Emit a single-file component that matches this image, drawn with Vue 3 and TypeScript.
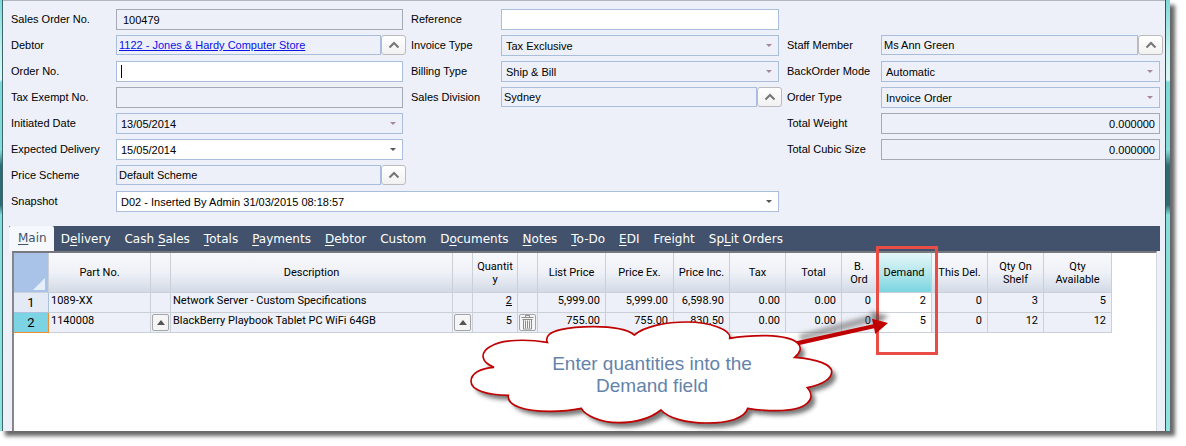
<script setup lang="ts">
import { ref } from 'vue'

type Kind = 'text' | 'lookup' | 'select'

interface Field {
  id: string
  label: string
  value: string
  kind: Kind
  editable?: boolean
  link?: boolean
  numeric?: boolean
  caret?: boolean
}

const columns: Field[][] = [
  [
    { id: 'sales-order', label: 'Sales Order No.', value: '100479', kind: 'text' },
    { id: 'debtor', label: 'Debtor', value: '1122 - Jones & Hardy Computer Store', kind: 'lookup', link: true },
    { id: 'order-no', label: 'Order No.', value: '', kind: 'text', editable: true, caret: true },
    { id: 'tax-exempt', label: 'Tax Exempt No.', value: '', kind: 'text' },
    { id: 'initiated', label: 'Initiated Date', value: '13/05/2014', kind: 'select' },
    { id: 'expected', label: 'Expected Delivery', value: '15/05/2014', kind: 'select', editable: true },
    { id: 'price-scheme', label: 'Price Scheme', value: 'Default Scheme', kind: 'lookup' },
  ],
  [
    { id: 'reference', label: 'Reference', value: '', kind: 'text', editable: true },
    { id: 'invoice-type', label: 'Invoice Type', value: 'Tax Exclusive', kind: 'select' },
    { id: 'billing-type', label: 'Billing Type', value: 'Ship & Bill', kind: 'select' },
    { id: 'division', label: 'Sales Division', value: 'Sydney', kind: 'lookup' },
  ],
  [
    { id: 'staff', label: 'Staff Member', value: 'Ms Ann Green', kind: 'lookup' },
    { id: 'backorder', label: 'BackOrder Mode', value: 'Automatic', kind: 'select' },
    { id: 'order-type', label: 'Order Type', value: 'Invoice Order', kind: 'select' },
    { id: 'weight', label: 'Total Weight', value: '0.000000', kind: 'text', numeric: true },
    { id: 'cubic', label: 'Total Cubic Size', value: '0.000000', kind: 'text', numeric: true },
  ],
]

// Each tab is split around its underlined access key.
const tabs: [string, string, string][] = [
  ['', 'M', 'ain'],
  ['D', 'e', 'livery'],
  ['Cash ', 'S', 'ales'],
  ['', 'T', 'otals'],
  ['', 'P', 'ayments'],
  ['', 'D', 'ebtor'],
  ['Custom', '', ''],
  ['D', 'o', 'cuments'],
  ['', 'N', 'otes'],
  ['', 'T', 'o-Do'],
  ['', 'E', 'DI'],
  ['Freight', '', ''],
  ['Sp', 'L', 'it Orders'],
]
const activeTab = ref(0)

interface Line {
  part: string
  description: string
  quantity: string
  figures: string[]
  demand: string
  stock: string[]
}

const lines: Line[] = [
  {
    part: '1089-XX',
    description: 'Network Server - Custom Specifications',
    quantity: '2',
    figures: ['5,999.00', '5,999.00', '6,598.90', '0.00', '0.00', '0'],
    demand: '2',
    stock: ['0', '3', '5'],
  },
  {
    part: '1140008',
    description: 'BlackBerry Playbook Tablet PC WiFi 64GB',
    quantity: '5',
    figures: ['755.00', '755.00', '830.50', '0.00', '0.00', '0'],
    demand: '5',
    stock: ['0', '12', '12'],
  },
]
const currentLine = 1
</script>

<template>
  <div class="page">
    <main class="window">
      <div class="edge left"></div>
      <div class="body">
        <form class="form" @submit.prevent>
          <div v-for="(fields, c) in columns" :key="c" class="column" :class="'column-' + (c + 1)">
            <div v-for="f in fields" :key="f.id" class="field" :class="f.kind">
              <label :for="f.id">{{ f.label }}</label>
              <template v-if="f.kind === 'lookup'">
                <div class="box short">
                  <a v-if="f.link" :id="f.id" href="#" class="link">{{ f.value }}</a>
                  <input v-else :id="f.id" :value="f.value" readonly />
                </div>
                <button type="button" class="lookup-button" :aria-label="'Look up ' + f.label">
                  <svg width="12" height="8" viewBox="0 0 12 8"><path d="M1.5 6.5 6 2l4.500 4.500" /></svg>
                </button>
              </template>
              <div v-else-if="f.kind === 'select'" class="box" :class="{ editable: f.editable }">
                <select :id="f.id"><option>{{ f.value }}</option></select>
                <i class="arrow"></i>
              </div>
              <div v-else class="box" :class="{ editable: f.editable, grey: !f.editable, numeric: f.numeric }">
                <input :id="f.id" :value="f.value" :readonly="!f.editable" />
                <i v-if="f.caret" class="caret"></i>
              </div>
            </div>
          </div>
          <div class="field select snapshot">
            <label for="snapshot">Snapshot</label>
            <div class="box editable">
              <select id="snapshot"><option>D02 - Inserted By Admin 31/03/2015 08:18:57</option></select>
              <i class="arrow"></i>
            </div>
          </div>
        </form>

        <nav class="tabs">
          <button
            v-for="(t, i) in tabs"
            :key="i"
            type="button"
            :class="{ active: i === activeTab }"
            @click="activeTab = i"
          >{{ t[0] }}<u>{{ t[1] }}</u>{{ t[2] }}</button>
        </nav>

        <section class="sheet">
          <table>
            <colgroup>
              <col class="w35" /><col class="w102" /><col class="w20" /><col class="w282" /><col class="w20" />
              <col class="w45" /><col class="w20" /><col class="w68" /><col class="w68" /><col class="w56" />
              <col class="w56" /><col class="w56" /><col class="w35" /><col class="w55" /><col class="w56" />
              <col class="w56" /><col class="w68" />
            </colgroup>
            <thead>
              <tr>
                <th class="corner"><svg width="12" height="12" viewBox="0 0 12 12"><path d="M12 0v12H0z" /></svg></th>
                <th>Part No.</th>
                <th></th>
                <th>Description</th>
                <th></th>
                <th class="breaking">Quantity</th>
                <th></th>
                <th>List Price</th>
                <th>Price Ex.</th>
                <th>Price Inc.</th>
                <th>Tax</th>
                <th>Total</th>
                <th>B.<br />Ord</th>
                <th class="demand">Demand</th>
                <th>This Del.</th>
                <th>Qty On<br />Shelf</th>
                <th>Qty<br />Available</th>
              </tr>
            </thead>
            <tbody>
              <tr v-for="(l, i) in lines" :key="l.part">
                <th scope="row" :class="{ current: i === currentLine }">{{ i + 1 }}</th>
                <td>{{ l.part }}</td>
                <td class="action">
                  <button v-if="i === currentLine" type="button" aria-label="Choose part">
                    <svg width="8" height="5" viewBox="0 0 8 5"><path d="M4 0l4 5H0z" fill="#555" /></svg>
                  </button>
                </td>
                <td>{{ l.description }}</td>
                <td class="action">
                  <button v-if="i === currentLine" type="button" aria-label="Edit description">
                    <svg width="8" height="5" viewBox="0 0 8 5"><path d="M4 0l4 5H0z" fill="#555" /></svg>
                  </button>
                </td>
                <td class="number" :class="{ linked: i === 0 }">{{ l.quantity }}</td>
                <td class="action">
                  <button v-if="i === currentLine" type="button" aria-label="Delete line">
                    <svg width="13" height="15" viewBox="0 0 13 15" fill="none" stroke="#8c8c8c">
                      <path d="M0.500 2.500h12M4.500 2V.5h4V2M1.500 4.500h10M2.500 4.500v9.500h8V4.500M4.500 5.500v7.500M6.500 5.500v7.500M8.500 5.500v7.500" />
                    </svg>
                  </button>
                </td>
                <td v-for="(n, k) in l.figures" :key="'f' + k" class="number">{{ n }}</td>
                <td class="number entry">{{ l.demand }}</td>
                <td v-for="(n, k) in l.stock" :key="'s' + k" class="number">{{ n }}</td>
              </tr>
            </tbody>
          </table>
        </section>
      </div>
      <div class="edge right"></div>

      <div class="highlight"></div>
      <svg class="callout" width="500" height="200" viewBox="0 -222 1500 600">
        <defs>
          <filter id="soft" x="-20%" y="-40%" width="140%" height="180%"><feGaussianBlur stdDeviation="7" /></filter>
          <path
            id="cloud"
            d="M292 97C275 58 370 50 430 50C490 50 535 60 553 75C585 48 650 36 710 36C780 36 845 60 839 85C880 78 920 77 950 77C1050 80 1070 112 1034 142C1105 147 1145 165 1145 185C1145 207 1120 222 1072 233C1100 265 1075 302 980 302C945 302 915 299 893 295C885 325 835 339 770 339C710 339 655 325 633 300C600 326 550 338 505 338C450 338 405 315 394 295C365 301 330 304 300 304C220 304 170 285 175 256C110 256 63 240 63 214C63 190 90 175 132 172C90 155 90 127 122 109C155 88 230 87 292 97Z"
          />
        </defs>
        <path d="M1050 84 1262 26" stroke="#555" stroke-opacity=".5" stroke-width="22" filter="url(#soft)" />
        <path d="M1262 4 1316 19 1270 50z" fill="#444" fill-opacity=".6" filter="url(#soft)" />
        <use href="#cloud" x="13" y="14" fill="#333" fill-opacity=".65" filter="url(#soft)" />
        <path d="M1040 100 1274 48" stroke="#c00000" stroke-width="13" />
        <path d="M1266 26 1314 39 1276 72z" fill="#c00000" />
        <use href="#cloud" fill="#fff" stroke="#c00000" stroke-width="5" />
      </svg>
      <p class="message">Enter quantities into the<br />Demand field</p>
    </main>
  </div>
</template>

<style>
body {
  margin: 0;
  background: #fff;
}
</style>

<style scoped>
.page {
  padding-right: 16px;
  padding-bottom: 15px;
  overflow: hidden;
  font-family: "Liberation Sans", Arial, sans-serif;
  font-size: 11px;
  color: #000;
}
.window {
  position: relative;
  display: flex;
  min-height: 431px;
  box-shadow: 5px 5px 4px rgba(0, 0, 0, .6);
}
.edge {
  flex: none;
  box-sizing: border-box;
  background: linear-gradient(#7fd9da 0, #c4f0f0 50px, #d8f6f6 80px, #7dd9d9 82px, #84dcdc 150px, #2d6a74 166px, #2d6a74 205px, #84dcdc 215px, #8fe3e0 100%);
}
.left {
  width: 3px;
  border-right: 1px solid #3e6669;
}
.right {
  width: 5px;
  border-left: 1px solid #2f5256;
}
.body {
  flex: 1;
  min-width: 0;
  display: flex;
  flex-direction: column;
  background: #edf0f8;
  border-top: 1px solid #b3b5bd;
}

.form {
  display: grid;
  grid-template-columns: 392fr 368fr 373fr;
  column-gap: 8px;
  padding: 8px 5px 14px 8px;
}
.column-3 {
  padding-top: 26px;
}
.field {
  display: flex;
  height: 26px;
}
.field label {
  flex: none;
  width: 105px;
  line-height: 20px;
  white-space: nowrap;
}
.column-2 label {
  width: 90px;
}
.column-3 label {
  width: 94px;
}
.snapshot {
  grid-column: span 2;
  height: 21px;
}
.box {
  position: relative;
  flex: 1;
  min-width: 0;
  box-sizing: border-box;
  height: 21px;
  border: 1px solid #a9bedb;
}
.grey {
  border-color: #a5a9b3;
}
.short {
  height: 20px;
}
.editable {
  background: #fff;
}
.box input,
.box select {
  display: block;
  box-sizing: border-box;
  width: 100%;
  height: 100%;
  margin: 0;
  padding: 0 4px;
  border: 0;
  outline: 0;
  appearance: none;
  background: transparent;
  font: inherit;
  color: inherit;
}
.short input {
  padding: 0 2px;
}
.grey input {
  padding: 0 6px;
}
.numeric input {
  padding: 0 4px;
  text-align: right;
}
.link {
  padding: 0 2px;
  line-height: 18px;
  color: #0a12e6;
  text-decoration: underline;
}
.arrow {
  position: absolute;
  right: 6px;
  top: 8px;
  border: 3px solid transparent;
  border-top-color: #a58798;
  border-bottom: 0;
}
.editable .arrow {
  border-top-color: #555;
}
.caret {
  position: absolute;
  left: 4px;
  top: 3px;
  width: 1px;
  height: 13px;
  background: #000;
}
.lookup {
  margin-right: -3px;
}
.lookup-button {
  display: flex;
  align-items: center;
  justify-content: center;
  flex: none;
  width: 25px;
  height: 20px;
  padding: 0;
  border: 1px solid #bbb;
  border-radius: 3px;
  background: linear-gradient(#fff, #f1f1f1);
}
.lookup-button path {
  fill: none;
  stroke: #757575;
  stroke-width: 2;
}

.tabs {
  display: flex;
  margin: 0 5px 0 6px;
  height: 25px;
  background: #42526c;
}
.tabs button {
  padding: 0 7px;
  border: 0;
  background: transparent;
  color: #fff;
  font: 12px "DejaVu Sans", Verdana, sans-serif;
  white-space: nowrap;
}
.tabs .active {
  padding: 0 7px 2px 9px;
  border-radius: 2px 2px 0 0;
  background: #f5f9fe;
  color: #42526c;
}
.tabs u {
  text-underline-offset: 2px;
}

.sheet {
  flex: 1;
  margin: 0 8px 0 9px;
  border-top: 2px solid #77797e;
  border-left: 2px solid #85878c;
  border-right: 1px solid #d5d8df;
  background: #fff;
}
table {
  table-layout: fixed;
  width: 1098px;
  border-collapse: separate;
  border-spacing: 0;
  font-family: Roboto, "Liberation Sans", sans-serif;
}
.w20 { width: 20px; }
.w35 { width: 35px; }
.w45 { width: 45px; }
.w55 { width: 55px; }
.w56 { width: 56px; }
.w68 { width: 68px; }
.w102 { width: 102px; }
.w282 { width: 282px; }
th,
td {
  box-sizing: border-box;
  padding: 0;
  border-right: 1px solid #cbcfd6;
  border-bottom: 1px solid #cbcfd6;
  font-weight: normal;
  white-space: nowrap;
}
thead th {
  height: 40px;
  line-height: 13px;
  background: linear-gradient(#f8f9fc, #eef1f7 50%, #d3dae6);
}
thead .breaking {
  padding: 0 3px;
  white-space: normal;
  word-break: break-all;
}
thead .corner {
  padding: 0 3px 2px 0;
  vertical-align: bottom;
  text-align: right;
  background: #a9c2e8;
}
.corner svg {
  display: block;
  margin-left: auto;
}
.corner path {
  fill: #e6eefa;
}
thead .demand {
  background: linear-gradient(#e4f7f9, #b5e7ec 50%, #79d5e0);
}
td {
  height: 20px;
  padding: 0 2px;
  vertical-align: top;
  line-height: 15px;
  background: #edf0f8;
}
tbody th {
  height: 20px;
  font-size: 13px;
  line-height: 19px;
  background: #e4eaf5;
  border-color: #a9c2e0;
}
tbody .current {
  background: #7bd3e3;
  border-color: #ee8f33;
}
.number {
  padding-right: 5px;
  text-align: right;
}
.linked {
  text-decoration: underline;
}
.entry {
  background: #fff;
}
td.action {
  padding: 1px;
}
.action button {
  display: flex;
  align-items: center;
  justify-content: center;
  box-sizing: border-box;
  width: 17px;
  height: 17px;
  padding: 0;
  border: 1px solid #a3a5aa;
  border-radius: 2px;
  background: #f5f5f6;
}
.action svg {
  flex: none;
}

.highlight {
  position: absolute;
  left: 876px;
  top: 246px;
  box-sizing: border-box;
  width: 62px;
  height: 109px;
  border: 3px solid #e84c45;
}
.callout {
  position: absolute;
  left: 450px;
  top: 236px;
}
.message {
  position: absolute;
  left: 532px;
  top: 353px;
  width: 240px;
  margin: 0;
  text-align: center;
  font: 19px/22px "Liberation Sans", Arial, sans-serif;
  color: #6483aa;
}
</style>
